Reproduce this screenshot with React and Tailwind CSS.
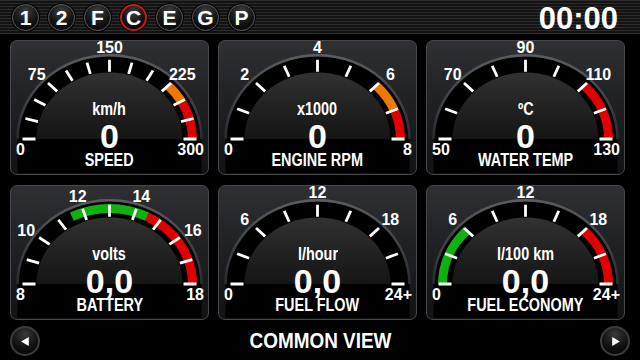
import React from "react";

const K = 0.91;
const CX = 99.5;
const CY = 99;
const W = 199;
const H = 135;

function pt(r, f, ry) {
  const t = f * Math.PI;
  const rr = ry === undefined ? r * K : ry;
  return [CX - r * Math.cos(t), CY - rr * Math.sin(t)];
}

function arc(r, f1, f2) {
  const [x1, y1] = pt(r, f1);
  const [x2, y2] = pt(r, f2);
  return `M${x1.toFixed(2)} ${y1.toFixed(2)} A${r} ${(r * K).toFixed(2)} 0 0 1 ${x2.toFixed(2)} ${y2.toFixed(2)}`;
}

function semi(r) {
  return `M${CX - r} ${CY} A${r} ${(r * K).toFixed(2)} 0 0 1 ${CX + r} ${CY} Z`;
}

function Gauge({ id, ticks, labels, bands = [], unit, value, label }) {
  const tickEls = [];
  for (let i = 0; i < ticks; i++) {
    const f = i / (ticks - 1);
    const [x1, y1] = pt(74, f);
    const [x2, y2] = pt(87, f);
    tickEls.push(
      <line key={i} x1={x1} y1={y1} x2={x2} y2={y2} stroke="#ffffff" strokeWidth="2.8" />
    );
  }
  const labelEls = labels.map((l, i) => {
    if (l.f === 0) {
      return (
        <text key={i} x={6} y={115} fill="#fff" fontSize="16" fontWeight="bold" textAnchor="start">
          {l.t}
        </text>
      );
    }
    if (l.f === 1) {
      return (
        <text key={i} x={194} y={115} fill="#fff" fontSize="16" fontWeight="bold" textAnchor="end">
          {l.t}
        </text>
      );
    }
    const [x, y] = pt(103, l.f, 92);
    return (
      <text key={i} x={x} y={y + 5.7} fill="#fff" fontSize="16" fontWeight="bold" textAnchor="middle">
        {l.t}
      </text>
    );
  });
  return (
    <div className="relative w-[199px] h-[135px] rounded-[7px] border border-[#46484c] bg-gradient-to-b from-[#2e3034] via-[#1e1f22] to-[#111214] shadow-[0_0_0_1px_#000,0_0_4px_#000] overflow-hidden">
      <svg
        className="absolute left-[-1px] top-[-1px]"
        width={W}
        height={H}
        viewBox={`0 0 ${W} ${H}`}
      >
        <defs>
          <linearGradient id={`in-${id}`} x1="0" y1="0" x2="0" y2="1">
            <stop offset="0" stopColor="#323232" />
            <stop offset="0.5" stopColor="#222222" />
            <stop offset="1" stopColor="#151515" />
          </linearGradient>
          <linearGradient id={`rim-${id}`} x1="0" y1="0" x2="0" y2="1">
            <stop offset="0" stopColor="#5a5c60" />
            <stop offset="1" stopColor="#2a2b2e" />
          </linearGradient>
        </defs>
        <rect x={CX - 92} y={CY - 1} width={184} height={H - CY - 1} fill="#000" />
        <path d={arc(92, 0, 1)} fill="none" stroke={`url(#rim-${id})`} strokeWidth="2.5" />
        <path d={semi(90.5)} fill="#000" />
        {bands.map((b, i) => (
          <path key={i} d={arc(83, b.from, b.to)} fill="none" stroke={b.c} strokeWidth="9" />
        ))}
        {tickEls}
        <path d={semi(73)} fill={`url(#in-${id})`} />
        {labelEls}
      </svg>
      <div className="absolute inset-0 flex flex-col items-center pt-[59px] text-white font-bold">
        <div className="text-[18px] leading-[18px] scale-x-[0.8] whitespace-nowrap">{unit}</div>
        <div className="mt-[4px] text-[34px] leading-[28px] whitespace-nowrap">{value}</div>
        <div className="mt-[1px] text-[19px] leading-[18px] scale-x-[0.76] whitespace-nowrap">{label}</div>
      </div>
    </div>
  );
}

const RED = "#e00000";
const ORANGE = "#f07800";
const GREEN = "#10b010";

function TopButton({ t, active }) {
  return (
    <div
      className={
        "w-[27px] h-[27px] rounded-full flex items-center justify-center text-white font-bold text-[21px] leading-none bg-[radial-gradient(circle_at_50%_25%,#3e3e3e_0%,#141414_55%,#000_100%)] shadow-[0_0_0_1px_#000] " +
        (active ? "border-2 border-[#c41a1a]" : "border border-[#55575b]")
      }
    >
      {t}
    </div>
  );
}

function ArrowButton({ dir }) {
  return (
    <div className="w-[30px] h-[30px] rounded-full flex items-center justify-center border-2 border-[#3a3c40] bg-[radial-gradient(circle_at_50%_25%,#3a3a3a_0%,#121212_55%,#000_100%)]">
      <svg width="11" height="11" viewBox="0 0 10 10">
        {dir === "left" ? (
          <polygon points="1,5 8,1 8,9" fill="#fff" />
        ) : (
          <polygon points="9,5 2,1 2,9" fill="#fff" />
        )}
      </svg>
    </div>
  );
}

export default function App() {
  return (
    <div className="w-[640px] h-[360px] bg-black overflow-hidden flex flex-col font-['Liberation_Sans',Arial,sans-serif] text-white">
      <div className="h-[34px] flex items-center justify-between bg-[repeating-linear-gradient(180deg,#2c2c2c_0px,#2c2c2c_1px,#131313_1px,#131313_3px)]">
        <div className="flex items-center gap-[9px] pl-[12px] pt-[1px]">
          {["1", "2", "F", "C", "E", "G", "P"].map((t) => (
            <TopButton key={t} t={t} active={t === "C"} />
          ))}
        </div>
        <div className="pr-[22px] text-[31px] font-bold leading-none pt-[2px]">00:00</div>
      </div>
      <div className="pt-[6px] pl-[10px] grid grid-cols-[199px_199px_199px] grid-rows-[135px_135px] gap-x-[9px] gap-y-[10px]">
        <Gauge
          id="speed"
          ticks={13}
          labels={[
            { t: "0", f: 0 },
            { t: "75", f: 0.25 },
            { t: "150", f: 0.5 },
            { t: "225", f: 0.75 },
            { t: "300", f: 1 },
          ]}
          bands={[
            { from: 0.75, to: 5 / 6, c: ORANGE },
            { from: 5 / 6, to: 1, c: RED },
          ]}
          unit="km/h"
          value="0"
          label="SPEED"
        />
        <Gauge
          id="rpm"
          ticks={9}
          labels={[
            { t: "0", f: 0 },
            { t: "2", f: 0.25 },
            { t: "4", f: 0.5 },
            { t: "6", f: 0.75 },
            { t: "8", f: 1 },
          ]}
          bands={[
            { from: 0.75, to: 0.875, c: ORANGE },
            { from: 0.875, to: 1, c: RED },
          ]}
          unit="x1000"
          value="0"
          label="ENGINE RPM"
        />
        <Gauge
          id="water"
          ticks={9}
          labels={[
            { t: "50", f: 0 },
            { t: "70", f: 0.25 },
            { t: "90", f: 0.5 },
            { t: "110", f: 0.75 },
            { t: "130", f: 1 },
          ]}
          bands={[{ from: 0.75, to: 1, c: RED }]}
          unit="ºC"
          value="0"
          label="WATER TEMP"
        />
        <Gauge
          id="batt"
          ticks={11}
          labels={[
            { t: "8", f: 0 },
            { t: "10", f: 0.2 },
            { t: "12", f: 0.4 },
            { t: "14", f: 0.6 },
            { t: "16", f: 0.8 },
            { t: "18", f: 1 },
          ]}
          bands={[
            { from: 0.35, to: 0.65, c: GREEN },
            { from: 0.65, to: 1, c: RED },
          ]}
          unit="volts"
          value="0,0"
          label="BATTERY"
        />
        <Gauge
          id="flow"
          ticks={9}
          labels={[
            { t: "0", f: 0 },
            { t: "6", f: 0.25 },
            { t: "12", f: 0.5 },
            { t: "18", f: 0.75 },
            { t: "24+", f: 1 },
          ]}
          unit="l/hour"
          value="0,0"
          label="FUEL FLOW"
        />
        <Gauge
          id="econ"
          ticks={9}
          labels={[
            { t: "0", f: 0 },
            { t: "6", f: 0.25 },
            { t: "12", f: 0.5 },
            { t: "18", f: 0.75 },
            { t: "24+", f: 1 },
          ]}
          bands={[
            { from: 0, to: 0.25, c: GREEN },
            { from: 0.75, to: 1, c: RED },
          ]}
          unit="l/100 km"
          value="0,0"
          label="FUEL ECONOMY"
        />
      </div>
      <div className="flex-1 flex items-center justify-between px-[10px] pt-[2px]">
        <ArrowButton dir="left" />
        <div className="text-[22px] font-bold leading-none scale-x-[0.86] whitespace-nowrap">COMMON VIEW</div>
        <ArrowButton dir="right" />
      </div>
    </div>
  );
}
